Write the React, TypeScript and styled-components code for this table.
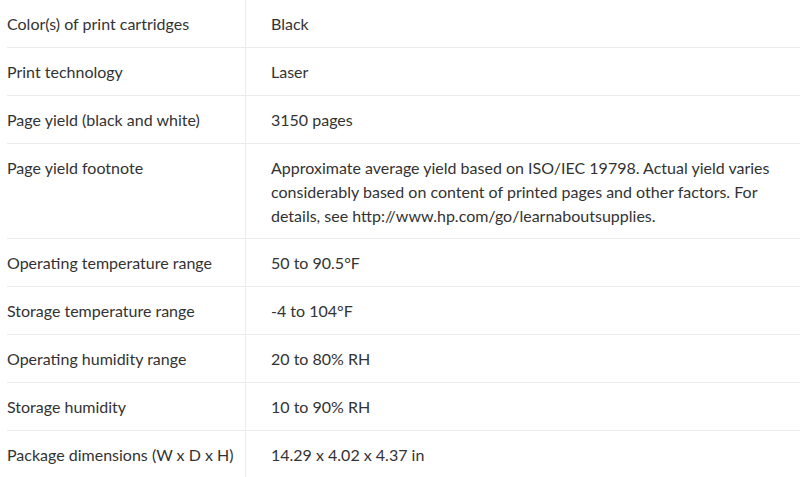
import styled, {createGlobalStyle} from "styled-components";

const GlobalStyle = createGlobalStyle`
    html, body {
        margin: 0;
        padding: 0;
        background: #ffffff;
    }
`

const specs: { label: string; value: string; long?: boolean }[] = [
    {label: 'Color(s) of print cartridges', value: 'Black'},
    {label: 'Print technology', value: 'Laser'},
    {label: 'Page yield (black and white)', value: '3150 pages'},
    {
        label: 'Page yield footnote',
        value: 'Approximate average yield based on ISO/IEC 19798. Actual yield varies considerably based on content of printed pages and other factors. For details, see http://www.hp.com/go/learnaboutsupplies.',
        long: true,
    },
    {label: 'Operating temperature range', value: '50 to 90.5°F'},
    {label: 'Storage temperature range', value: '-4 to 104°F'},
    {label: 'Operating humidity range', value: '20 to 80% RH'},
    {label: 'Storage humidity', value: '10 to 90% RH'},
    {label: 'Package dimensions (W x D x H)', value: '14.29 x 4.02 x 4.37 in'},
]

const Wrapper = styled.div`
    padding-left: 7px;
    width: 793px;
`

const Table = styled.table`
    width: 100%;
    border-collapse: collapse;
    font-family: Lato, "Open Sans", sans-serif;
    font-size: 16px;
    line-height: 24px;
    color: #333333;
`

const Row = styled.tr<{ $last?: boolean }>`
    border-bottom: 1px solid ${({$last}) => $last ? 'transparent' : '#ebebeb'};
`

const Label = styled.td<{ $long?: boolean }>`
    width: 238px;
    padding: 12px 0 ${({$long}) => $long ? 10 : 11}px 0;
    vertical-align: top;
    border-right: 1px solid #ebebeb;
`

const Value = styled.td<{ $long?: boolean }>`
    padding: 12px 10px ${({$long}) => $long ? 10 : 11}px 25px;
    vertical-align: top;
`

export default function App() {
    return (
        <>
            <GlobalStyle/>
            <Wrapper>
                <Table>
                    <tbody>
                    {specs.map((s, i) => (
                        <Row key={s.label} $last={i === specs.length - 1}>
                            <Label $long={s.long}>{s.label}</Label>
                            <Value $long={s.long}>{s.value}</Value>
                        </Row>
                    ))}
                    </tbody>
                </Table>
            </Wrapper>
        </>
    );
}
